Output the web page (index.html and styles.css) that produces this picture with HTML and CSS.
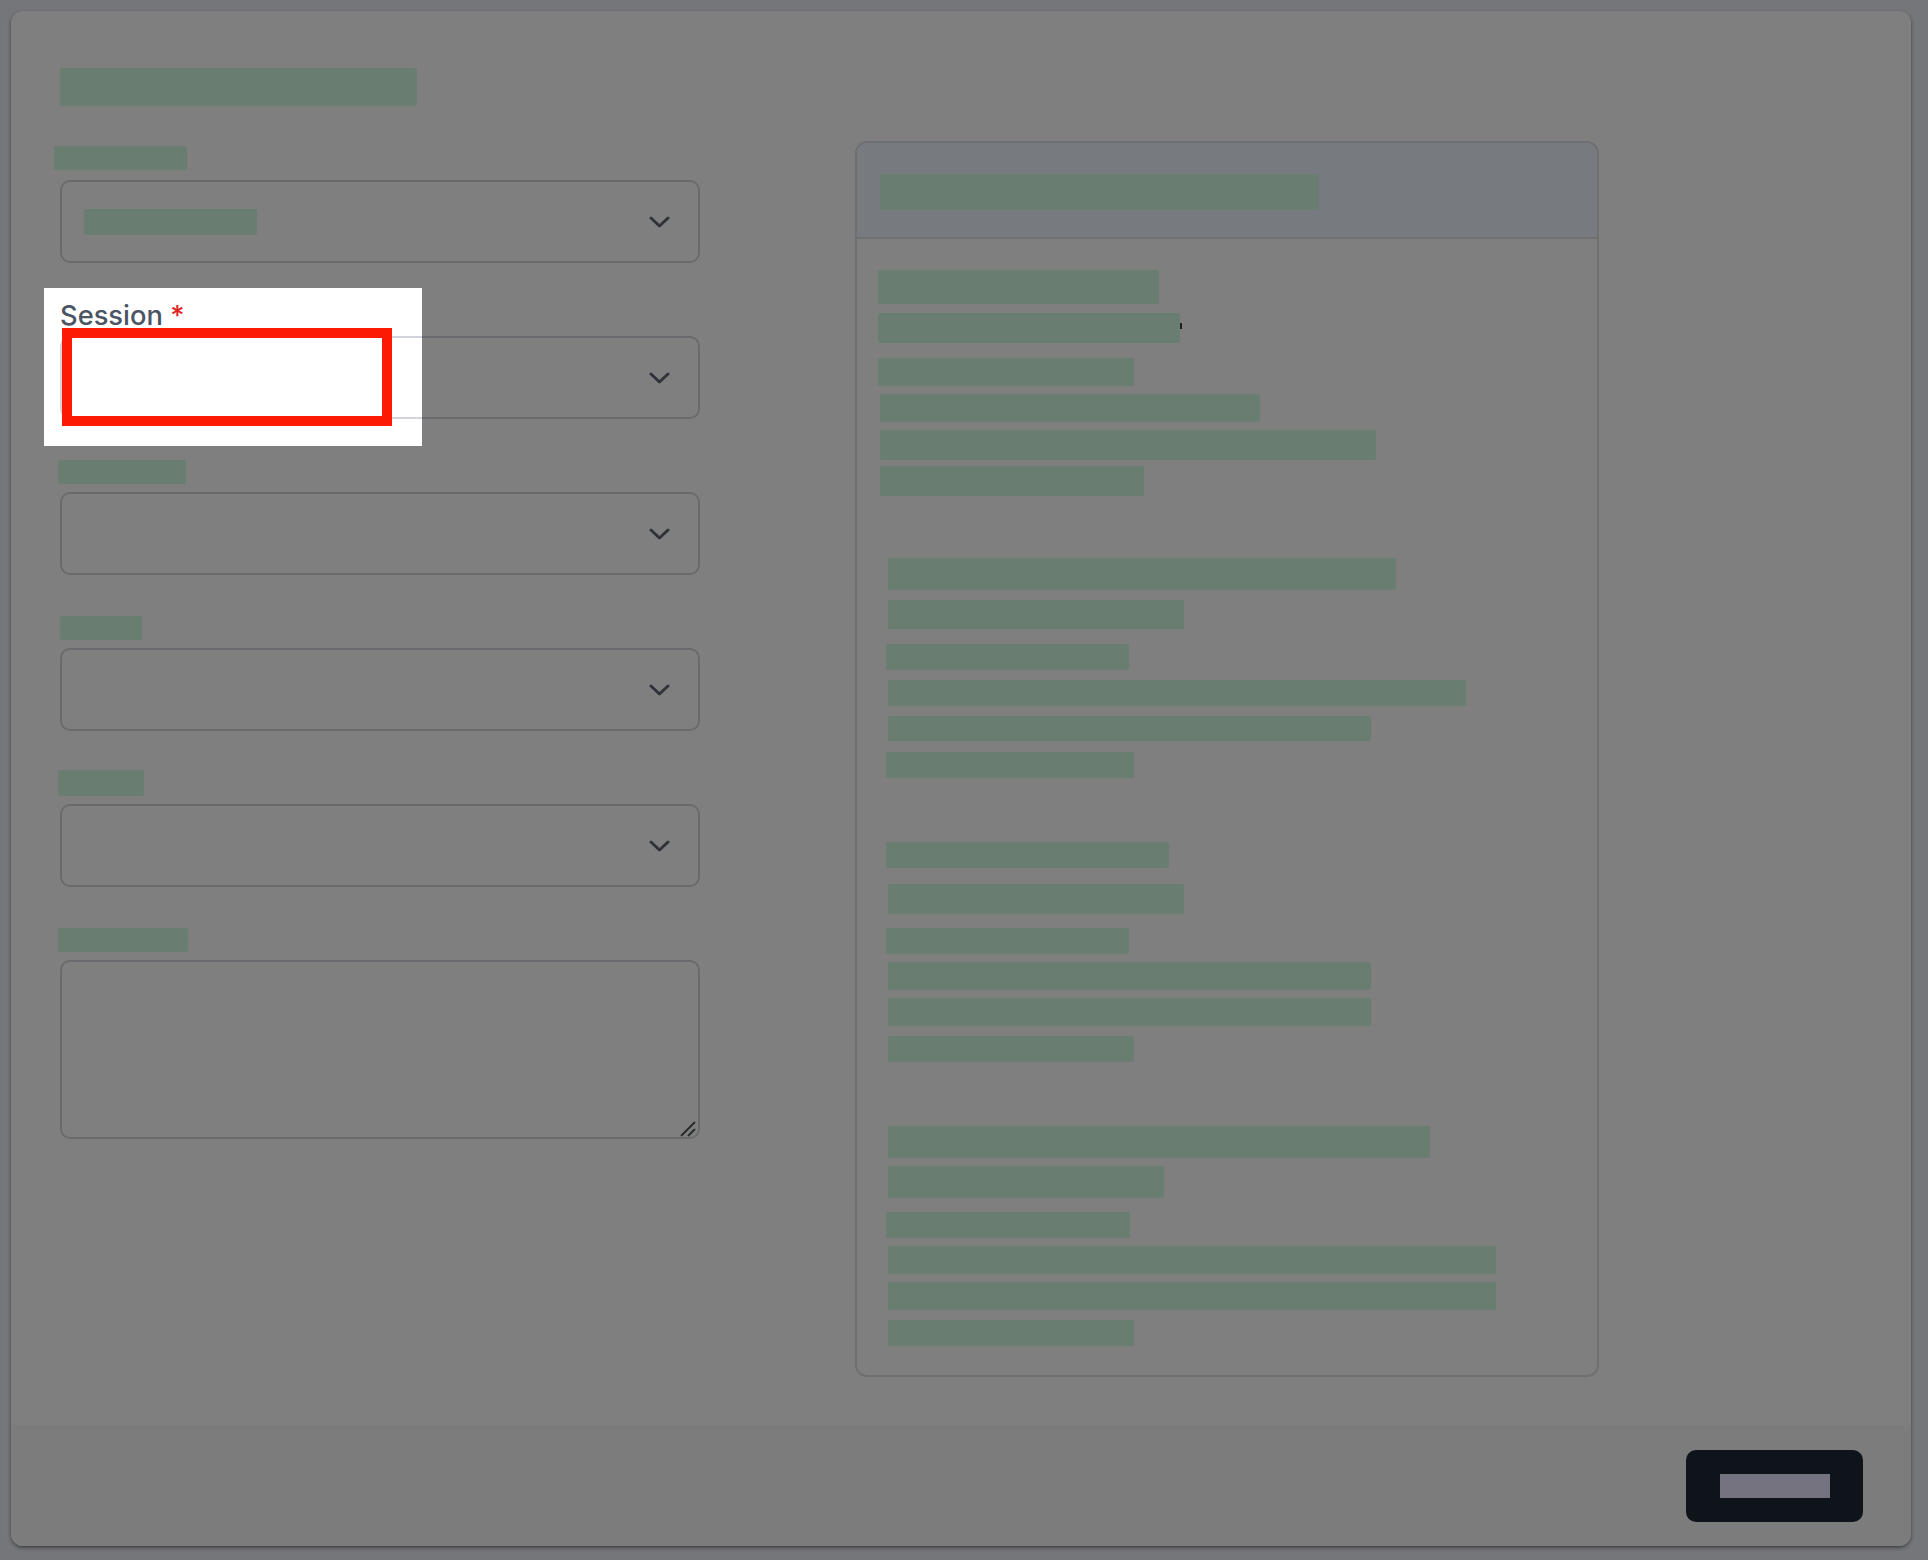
FILE: index.html
```html
<!DOCTYPE html>
<html lang="en">
<head>
<meta charset="utf-8">
<title>Session form</title>
<link rel="stylesheet" href="styles.css">
</head>
<body>
<div class="card">
  <main class="main">
    <div class="title"><span class="redact title-bar"></span></div>
    <div class="columns">
      <form class="form">
        <div class="field">
          <div class="label"><span class="redact" style="margin-top:6px;margin-left:-6px;width:133px;height:24px"></span></div>
          <div class="select">
            <span class="redact" style="width:173px;height:26px"></span>
            <svg class="chev" viewBox="0 0 21 12" width="21" height="12"><path d="M2 2 L10.5 10 L19 2"/></svg>
          </div>
        </div>
        <div class="field">
          <label class="label text-label">Session <span class="req">*</span></label>
          <div class="select">
            <span></span>
            <svg class="chev" viewBox="0 0 21 12" width="21" height="12"><path d="M2 2 L10.5 10 L19 2"/></svg>
          </div>
        </div>
        <div class="field">
          <div class="label"><span class="redact" style="margin-top:8px;margin-left:-2px;width:128px;height:24px"></span></div>
          <div class="select">
            <span></span>
            <svg class="chev" viewBox="0 0 21 12" width="21" height="12"><path d="M2 2 L10.5 10 L19 2"/></svg>
          </div>
        </div>
        <div class="field">
          <div class="label"><span class="redact" style="margin-top:8px;margin-left:0;width:82px;height:24px"></span></div>
          <div class="select">
            <span></span>
            <svg class="chev" viewBox="0 0 21 12" width="21" height="12"><path d="M2 2 L10.5 10 L19 2"/></svg>
          </div>
        </div>
        <div class="field">
          <div class="label"><span class="redact" style="margin-top:6px;margin-left:-2px;width:86px;height:26px"></span></div>
          <div class="select">
            <span></span>
            <svg class="chev" viewBox="0 0 21 12" width="21" height="12"><path d="M2 2 L10.5 10 L19 2"/></svg>
          </div>
        </div>
        <div class="field">
          <div class="label"><span class="redact" style="margin-top:8px;margin-left:-2px;width:130px;height:24px"></span></div>
          <div class="textarea-wrap">
            <textarea class="textarea"></textarea>
            <svg class="grip" viewBox="0 0 16 16" width="16" height="16"><path d="M15 1 L1 15 M15 8 L8 15"/></svg>
          </div>
        </div>
      </form>

      <section class="panel">
        <div class="panel-head"><span class="redact" style="width:439px;height:36px"></span></div>
        <div class="panel-body">
          <div class="group">
            <div class="row"><span class="redact" style="margin-left:0;width:281px;height:34px"></span></div>
            <div class="row" style="margin-top:9px"><span class="redact" style="margin-left:0;width:302px;height:30px"></span><span class="tick"></span></div>
            <div class="row" style="margin-top:15px"><span class="redact" style="margin-left:0;width:256px;height:28px"></span></div>
            <div class="row" style="margin-top:8px"><span class="redact" style="margin-left:2px;width:380px;height:28px"></span></div>
            <div class="row" style="margin-top:8px"><span class="redact" style="margin-left:2px;width:496px;height:30px"></span></div>
            <div class="row" style="margin-top:6px"><span class="redact" style="margin-left:2px;width:264px;height:30px"></span></div>
          </div>
          <div class="group g62">
            <div class="row"><span class="redact" style="margin-left:10px;width:508px;height:32px"></span></div>
            <div class="row" style="margin-top:10px"><span class="redact" style="margin-left:10px;width:296px;height:29px"></span></div>
            <div class="row" style="margin-top:15px"><span class="redact" style="margin-left:8px;width:243px;height:26px"></span></div>
            <div class="row" style="margin-top:10px"><span class="redact" style="margin-left:10px;width:578px;height:26px"></span></div>
            <div class="row" style="margin-top:10px"><span class="redact" style="margin-left:10px;width:483px;height:25px"></span></div>
            <div class="row" style="margin-top:11px"><span class="redact" style="margin-left:8px;width:248px;height:26px"></span></div>
          </div>
          <div class="group g64">
            <div class="row"><span class="redact" style="margin-left:8px;width:283px;height:26px"></span></div>
            <div class="row" style="margin-top:16px"><span class="redact" style="margin-left:10px;width:296px;height:30px"></span></div>
            <div class="row" style="margin-top:14px"><span class="redact" style="margin-left:8px;width:243px;height:26px"></span></div>
            <div class="row" style="margin-top:8px"><span class="redact" style="margin-left:10px;width:483px;height:28px"></span></div>
            <div class="row" style="margin-top:8px"><span class="redact" style="margin-left:10px;width:483px;height:28px"></span></div>
            <div class="row" style="margin-top:10px"><span class="redact" style="margin-left:10px;width:246px;height:26px"></span></div>
          </div>
          <div class="group g64">
            <div class="row"><span class="redact" style="margin-left:10px;width:542px;height:32px"></span></div>
            <div class="row" style="margin-top:8px"><span class="redact" style="margin-left:10px;width:276px;height:32px"></span></div>
            <div class="row" style="margin-top:14px"><span class="redact" style="margin-left:8px;width:244px;height:26px"></span></div>
            <div class="row" style="margin-top:8px"><span class="redact" style="margin-left:10px;width:608px;height:28px"></span></div>
            <div class="row" style="margin-top:8px"><span class="redact" style="margin-left:10px;width:608px;height:28px"></span></div>
            <div class="row" style="margin-top:10px"><span class="redact" style="margin-left:10px;width:246px;height:26px"></span></div>
          </div>
        </div>
      </section>
    </div>
  </main>
  <footer class="footer">
    <button class="btn" type="button"><span class="btn-label"></span></button>
  </footer>
</div>

<div class="spotlight"></div>
<div class="callout"></div>
</body>
</html>
```

FILE: styles.css
```css
* { box-sizing: border-box; }

html, body {
  margin: 0;
  padding: 0;
}

body {
  width: 1928px;
  height: 1560px;
  overflow: hidden;
  background: #ebedf5;
  font-family: Inter, "Liberation Sans", sans-serif;
}

.card {
  margin: 11px 0 0 11px;
  width: 1900px;
  height: 1535px;
  background: #ffffff;
  border-radius: 12px;
  overflow: hidden;
  display: flex;
  flex-direction: column;
  box-shadow: 0 2px 4px rgba(0, 0, 0, 0.35), 0 1px 2px rgba(0, 0, 0, 0.2);
}

.main {
  flex: 1;
  padding: 57px 0 0 49px;
}

.redact {
  display: block;
  background: #d3fde3;
  border-radius: 2px;
  flex: none;
}

.title-bar {
  width: 357px;
  height: 38px;
}

.columns {
  display: flex;
  align-items: flex-start;
  gap: 155px;
  margin-top: 34px;
}

.form {
  width: 640px;
  display: flex;
  flex-direction: column;
  gap: 33px;
  margin: 0;
}

.field {
  display: flex;
  flex-direction: column;
}

.label {
  height: 40px;
  line-height: 40px;
}

.text-label {
  display: block;
  font-size: 27.3px;
  font-weight: 500;
  color: #4b5563;
}

.req {
  color: #e02424;
}

.select {
  height: 83px;
  border: 2px solid #d1d5db;
  border-radius: 10px;
  background: #ffffff;
  display: flex;
  align-items: center;
  justify-content: space-between;
  padding: 0 28px 0 22px;
}

.chev {
  display: block;
  fill: none;
  stroke: #5f6470;
  stroke-width: 3;
  stroke-linecap: round;
  stroke-linejoin: round;
}

.textarea-wrap {
  position: relative;
}

.textarea {
  display: block;
  width: 640px;
  height: 179px;
  border: 2px solid #d1d5db;
  border-radius: 10px;
  background: #ffffff;
  resize: none;
  font-family: inherit;
  margin: 0;
}

.grip {
  position: absolute;
  right: 4px;
  bottom: 2px;
  fill: none;
  stroke: #555759;
  stroke-width: 2;
  pointer-events: none;
}

.panel {
  width: 744px;
  margin-top: 1px;
  border: 2px solid #dddee3;
  border-radius: 12px;
  overflow: hidden;
  background: #ffffff;
}

.panel-head {
  background: #eef4ff;
  border-bottom: 2px solid #dddee3;
  padding: 31px 22px 27px 23px;
}

.panel-body {
  padding: 31px 20px 29px 21px;
}

.group.g62 { margin-top: 62px; }
.group.g64 { margin-top: 64px; }

.row {
  display: flex;
  align-items: flex-start;
}

.tick {
  display: block;
  width: 2px;
  height: 6px;
  margin-top: 10px;
  background: #404040;
}

.footer {
  height: 121px;
  flex: none;
  background: #f7f8f7;
  display: flex;
  align-items: center;
  justify-content: flex-end;
  padding-right: 48px;
}

.btn {
  width: 177px;
  height: 72px;
  border: none;
  border-radius: 10px;
  background: #1f2937;
  display: flex;
  align-items: center;
  justify-content: center;
  padding: 0;
}

.btn-label {
  display: block;
  width: 110px;
  height: 24px;
  background: #eae6fe;
}

/* Tutorial overlay: dims everything except the highlighted area */
.spotlight {
  position: absolute;
  left: 44px;
  top: 288px;
  width: 378px;
  height: 158px;
  box-shadow: 0 0 0 4000px rgba(0, 0, 0, 0.5);
  pointer-events: none;
}

.callout {
  position: absolute;
  left: 62px;
  top: 328px;
  width: 330px;
  height: 98px;
  border: 10px solid #fc1a02;
  pointer-events: none;
}
```
